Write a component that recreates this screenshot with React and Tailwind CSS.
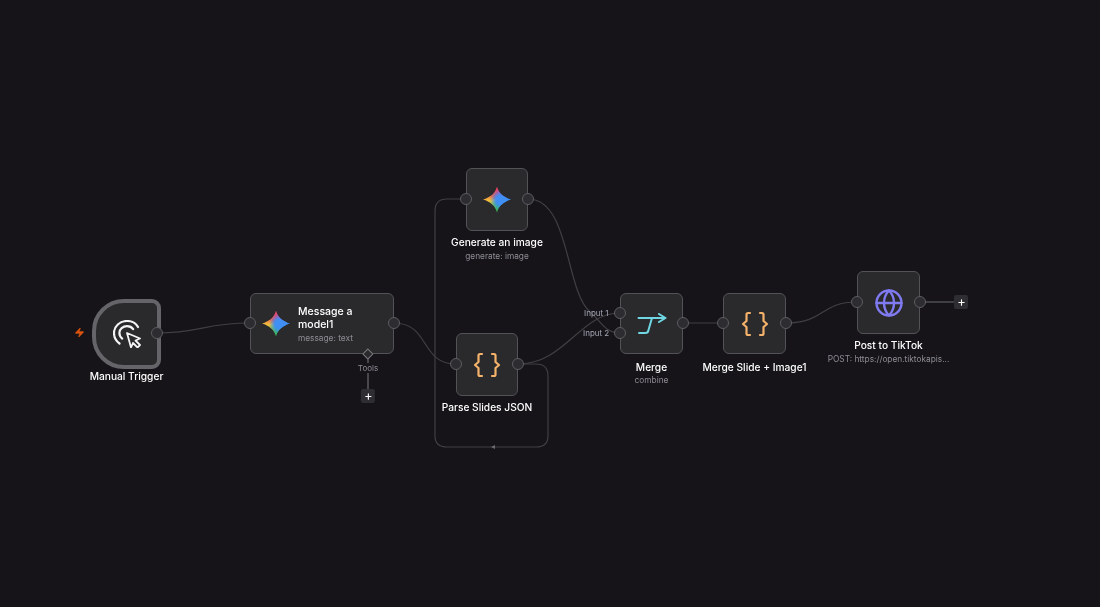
import React from 'react';
import { Globe, Plus, Zap } from 'lucide-react';

const Handle = ({ className }) => (
  <div className={`absolute w-[12px] h-[12px] -translate-y-1/2 rounded-full bg-[#2d2c30] border border-[#5d5c61] ${className}`} />
);

const AddButton = ({ className = '' }) => (
  <div className={`w-[14px] h-[14px] rounded-[2px] bg-[#2e2d31] flex items-center justify-center text-white ${className}`}>
    <Plus size={9} strokeWidth={3} />
  </div>
);

const Title = ({ className = '', children }) => (
  <div className={`whitespace-nowrap text-[10.2px] leading-[12px] font-medium text-white ${className}`}>
    {children}
  </div>
);

const Sub = ({ className = '', children }) => (
  <div className={`whitespace-nowrap text-[8.3px] leading-[10px] text-[#8e8d94] ${className}`}>
    {children}
  </div>
);

const Box = ({ className = '', children }) => (
  <div className={`relative flex items-center justify-center rounded-[6px] bg-[#2a292c] border border-[#535256] ${className}`}>
    {children}
  </div>
);

const GeminiStar = () => (
  <div className="w-[28px] h-[26px] shrink-0 bg-[radial-gradient(circle_at_62%_50%,#3f8ff5_0%,#3f8ff5_20%,transparent_48%),conic-gradient(#e8436a_0deg,#8a5fd8_40deg,#3d8cf2_85deg,#38a8c8_140deg,#35b85a_180deg,#8cc544_225deg,#f1c03a_265deg,#ef6149_315deg,#e8436a_360deg)] [clip-path:path('M14_0C15.8_7_21_11_28_13C21_15_15.8_19_14_26C12.2_19_7_15_0_13C7_11_12.2_7_14_0Z')]" />
);

const BracesIcon = () => (
  <svg width="28" height="26" viewBox="0 0 28 26" fill="none" stroke="#f4b26a" strokeWidth="2.2" strokeLinecap="round" strokeLinejoin="round">
    <path d="M9 2H7Q5.5 2 5.5 3.5V10L2 13L5.5 16V22.5Q5.5 24 7 24H9" />
    <path d="M19 2H21Q22.5 2 22.5 3.5V10L26 13L22.5 16V22.5Q22.5 24 21 24H19" />
  </svg>
);

const ClickIcon = () => (
  <svg width="28" height="28" viewBox="0 0 28 28" fill="none" stroke="#f4f4f6" strokeWidth="2.2" strokeLinecap="round" strokeLinejoin="round">
    <path d="M6.5 23.5C3.2 21.2 1 17.4 1 13C1 6.4 6.9 1 14 1C18.8 1 23 3.4 25 7" />
    <path d="M9.2 18.6C7.4 17.2 6.4 15.2 6.4 13C6.4 9.2 9.8 6.2 14 6.2C16.6 6.2 18.9 7.3 20.2 9.2" />
    <path d="M14 13L27 18.5L22.5 20.5L27 25L24.5 27.5L20 23L18 27.5Z" strokeWidth="1.8" />
  </svg>
);

const MergeIcon = () => (
  <svg width="30" height="22" viewBox="0 0 30 22" fill="none" stroke="#6fd6e2" strokeWidth="2" strokeLinecap="round" strokeLinejoin="round">
    <path d="M1.5 5H28" />
    <path d="M22 1L28.5 5L22 9" />
    <path d="M15 5L11.5 17Q11 20 8.5 20H2" />
  </svg>
);

export default function App() {
  return (
    <div className="relative w-[1100px] h-[607px] overflow-hidden bg-[#161419] font-['Inter',sans-serif] blur-[0.3px]">
      {/* edges */}
      <svg className="absolute inset-0" width="1100" height="607" fill="none" stroke="#403f44" strokeWidth="1.2">
        <path d="M157 333C200 333 205 323 250 323" />
        <path d="M394 323C430 323 420 364 456 364" />
        <path d="M528 199C570 199 565 290 590 312C602 322 605 333 620 333" />
        <path d="M518 364C565 364 580 313 620 313" />
        <path d="M683 323H723" />
        <path d="M786 323C825 323 820 302 857 302" />
        <path d="M920 302H954" stroke="#6b6a6f" />
        <path d="M368 358V389" stroke="#6b6a6f" />
        <path d="M518 364H536C544 364 548 368 548 376V436C548 443 544 447 536 447H447C439 447 435 443 435 436V211C435 203 439 199 447 199H466" />
        <path d="M495 445L491 447L495 449Z" fill="#6b6a6f" stroke="none" />
      </svg>

      {/* manual trigger */}
      <div className="absolute left-[92px] top-[299px] w-[69px] flex flex-col items-center">
        <div className="relative w-[69px] h-[70px] flex items-center justify-center bg-[#2a292c] border-[4px] border-[#656468] rounded-l-[32px] rounded-r-[9px]">
          <ClickIcon />
          <Zap className="absolute -left-[22px] top-[24px]" size={11} color="#d9530f" fill="#d9530f" strokeWidth={1} />
          <Handle className="-right-[6px] top-[30px]" />
        </div>
        <Title className="mt-[1px]">Manual Trigger</Title>
      </div>

      {/* message a model */}
      <Box className="absolute left-[250px] top-[293px] w-[144px] h-[61px] !justify-start pl-[11px] gap-[8px]">
        <GeminiStar />
        <div className="pt-[2px]">
          <div className="text-[10.5px] leading-[12.5px] font-medium text-white">Message a<br />model1</div>
          <Sub className="mt-[2px]">message: text</Sub>
        </div>
        <Handle className="-left-[7px] top-[29px]" />
        <Handle className="-right-[7px] top-[29px]" />
        <div className="absolute left-[117px] top-[56px] -translate-x-1/2 flex flex-col items-center">
          <div className="w-[8px] h-[8px] rotate-45 bg-[#2a292c] border border-[#7a797e]" />
          <div className="mt-[5px] px-[1px] bg-[#161419] text-[8px] leading-[10px] text-[#8e8d94]">Tools</div>
          <AddButton className="mt-[16px]" />
        </div>
      </Box>

      {/* generate an image */}
      <div className="absolute left-[466px] top-[168px] w-[62px] flex flex-col items-center">
        <Box className="w-[62px] h-[63px]">
          <GeminiStar />
          <Handle className="-left-[7px] top-[30px]" />
          <Handle className="-right-[7px] top-[30px]" />
        </Box>
        <Title className="mt-[5px]">Generate an image</Title>
        <Sub className="mt-[3px]">generate: image</Sub>
      </div>

      {/* parse slides json */}
      <div className="absolute left-[456px] top-[333px] w-[62px] flex flex-col items-center">
        <Box className="w-[62px] h-[63px]">
          <BracesIcon />
          <Handle className="-left-[7px] top-[30px]" />
          <Handle className="-right-[7px] top-[30px]" />
        </Box>
        <Title className="mt-[5px]">Parse Slides JSON</Title>
      </div>

      {/* merge */}
      <div className="absolute left-[620px] top-[293px] w-[63px] flex flex-col items-center">
        <Box className="w-[63px] h-[61px]">
          <MergeIcon />
          <Handle className="-left-[7px] top-[19px]" />
          <Handle className="-left-[7px] top-[39px]" />
          <Handle className="-right-[7px] top-[29px]" />
          <Sub className="absolute -left-[37px] top-[14px] !text-[#a3a6b4] !text-[8px]">Input 1</Sub>
          <Sub className="absolute -left-[38px] top-[34px] !text-[#a3a6b4] !text-[8px]">Input 2</Sub>
        </Box>
        <Title className="mt-[7px]">Merge</Title>
        <Sub className="mt-[2px]">combine</Sub>
      </div>

      {/* merge slide + image */}
      <div className="absolute left-[723px] top-[293px] w-[63px] flex flex-col items-center">
        <Box className="w-[63px] h-[61px]">
          <BracesIcon />
          <Handle className="-left-[7px] top-[29px]" />
          <Handle className="-right-[7px] top-[29px]" />
        </Box>
        <Title className="mt-[7px]">Merge Slide + Image1</Title>
      </div>

      {/* post to tiktok */}
      <div className="absolute left-[857px] top-[271px] w-[63px] flex flex-col items-center">
        <Box className="w-[63px] h-[63px]">
          <Globe size={30} color="#7f7af0" strokeWidth={1.9} />
          <Handle className="-left-[7px] top-[30px]" />
          <Handle className="-right-[7px] top-[30px]" />
          <AddButton className="absolute -right-[49px] top-[23px]" />
        </Box>
        <Title className="mt-[5px]">Post to TikTok</Title>
        <Sub className="mt-[3px]">POST: https://open.tiktokapis...</Sub>
      </div>
    </div>
  );
}
